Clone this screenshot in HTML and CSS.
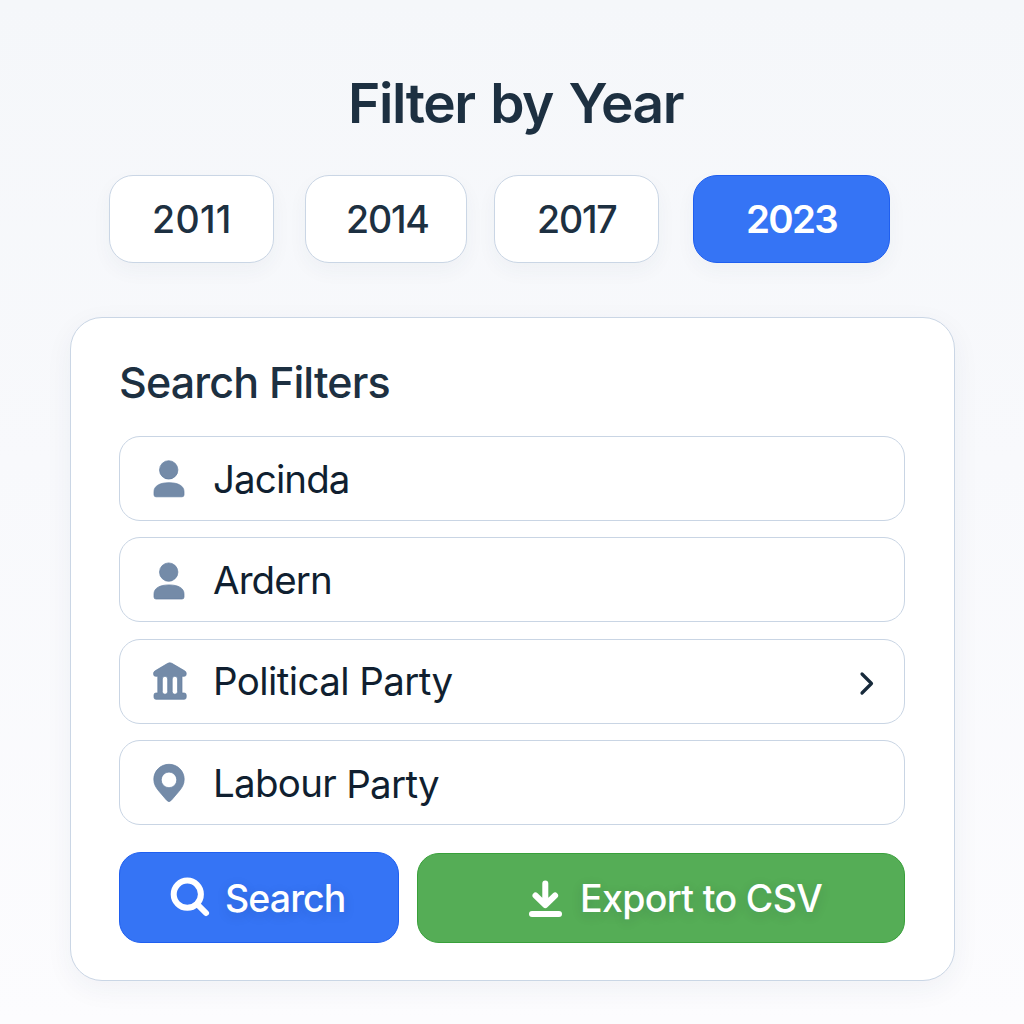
FILE: index.html
```html
<!DOCTYPE html>
<html lang="en">
<head>
<meta charset="utf-8">
<title>Filter by Year</title>
<link rel="stylesheet" href="styles.css">
</head>
<body>
<main class="page">
  <h1 class="title">Filter by Year</h1>
  <nav class="years">
    <button class="year y2011"><span>2011</span></button>
    <button class="year y2014"><span>2014</span></button>
    <button class="year y2017"><span>2017</span></button>
    <button class="year y2023 active"><span>2023</span></button>
  </nav>
  <section class="card">
    <h2 class="heading">Search Filters</h2>
    <div class="fields">
      <div class="field">
        <svg class="icon" viewBox="0 0 40 44"><circle cx="19.700" cy="12.900" r="9.200"/><path d="M5 37.800v-3.200c0-5.500 5.500-8.900 15-8.900s15 3.400 15 8.900v3.200a2 2 0 0 1-2 2H7a2 2 0 0 1-2-2z"/></svg>
        <span class="value first-name">Jacinda</span>
      </div>
      <div class="field">
        <svg class="icon" viewBox="0 0 40 44"><circle cx="19.700" cy="14.100" r="9.200"/><path d="M5 39v-3.200c0-5.500 5.500-8.900 15-8.900s15 3.400 15 8.900V39a2 2 0 0 1-2 2H7a2 2 0 0 1-2-2z"/></svg>
        <span class="value last-name">Ardern</span>
      </div>
      <div class="field">
        <svg class="icon" viewBox="0 0 40 44"><path fill-rule="evenodd" d="M18.800 4.300q2-1.100 4 0L35.600 11.800q1.600.9 1.600 2.400v1.100a2 2 0 0 1-2 2H33V34h2.200a2 2 0 0 1 2 2v2.300a2 2 0 0 1-2 2H7a2 2 0 0 1-2-2V36a2 2 0 0 1 2-2h1.800V17.300H6.600a2 2 0 0 1-2-2v-1.100q0-1.500 1.600-2.400zM16 17.300a2.700 2.700 0 0 0-2.700 2.700v12.600a2.700 2.700 0 0 0 5.400 0V20a2.700 2.700 0 0 0-2.700-2.700zM25.900 17.300a2.700 2.700 0 0 0-2.700 2.700v12.600a2.700 2.700 0 0 0 5.400 0V20a2.700 2.700 0 0 0-2.700-2.700z"/></svg>
        <span class="value party-label">Political Party</span>
        <svg class="chevron" viewBox="0 0 16 26"><path d="M3 4 12.500 13.500 3 23"/></svg>
      </div>
      <div class="field">
        <svg class="icon" viewBox="0 0 40 44"><path fill-rule="evenodd" d="M20 4.300C11.400 4.300 4.800 11 4.800 19.300c0 5 2.200 8.500 5.200 12l7.700 9q2.300 2.700 4.600 0l7.700-9c3-3.500 5.200-7 5.200-12C35.200 11 28.600 4.300 20 4.300zM20 12.100a7.800 7.800 0 1 1 0 15.600 7.800 7.800 0 0 1 0-15.600z"/></svg>
        <span class="value party-name">Labour <span class="lowered">Party</span></span>
      </div>
    </div>
    <div class="actions">
      <button class="action search">
        <svg class="glass" viewBox="0 0 42 42"><circle cx="17.300" cy="18.200" r="13.600"/><path d="m27 28 9 9"/></svg>
        <span class="label">Search</span>
      </button>
      <button class="action export">
        <svg class="download" viewBox="0 0 34 40"><path d="M17.300 5.500v21M7.500 17.500l9.800 9.500 9.800-9.500"/><path d="M4 36h27"/></svg>
        <span class="label">Export to CSV</span>
      </button>
    </div>
  </section>
</main>
</body>
</html>
```
FILE: styles.css
```css
* { box-sizing: border-box; }

body {
  margin: 0;
  height: 1024px;
  overflow: hidden;
  background: linear-gradient(#f5f7fa 0%, #f8f9fc 45%, #fcfcfe 100%);
  color: #1d3041;
  font-family: Inter, "Liberation Sans", sans-serif;
}

button {
  border: 0;
  padding: 0;
  margin: 0;
  font: inherit;
  color: inherit;
}

.page { padding: 67px 69px 0 70px; }

.title {
  margin: 0 0 36px 278px;
  font-size: 55px;
  line-height: 72px;
  font-weight: 600;
  letter-spacing: -1.4px;
  word-spacing: 3px;
  white-space: nowrap;
}

.years {
  display: flex;
  height: 88px;
  margin-left: 39px;
}

.year {
  display: flex;
  align-items: center;
  justify-content: flex-start;
  width: 165px;
  height: 88px;
  background: #fff;
  border: 1px solid #cad6e5;
  border-radius: 24px;
  box-shadow: 0 8px 20px rgba(40, 60, 100, .045);
  font-size: 37.5px;
  font-weight: 500;
  letter-spacing: -1.2px;
}

.y2011 { padding-left: 42px; letter-spacing: .3px; }
.y2014 { width: 162px; margin-left: 31px; padding-left: 40px; }
.y2017 { margin-left: 27px; padding-left: 42px; }
.y2023 { width: 197px; margin-left: 34px; padding-left: 52px; }

.year.active {
  background: #3574f5;
  border-color: #1f5ff0;
  color: #fff;
  font-size: 38.5px;
  font-weight: 600;
  letter-spacing: -1.7px;
}

.card {
  height: 664px;
  margin-top: 54px;
  padding: 36px 49px 0 48px;
  background: #fff;
  border: 1px solid #cad6e5;
  border-radius: 32px;
  box-shadow: 0 8px 28px rgba(40, 60, 100, .055);
}

.heading {
  margin: 0 0 26px;
  font-size: 43px;
  line-height: 56px;
  font-weight: 500;
  letter-spacing: -.85px;
  white-space: nowrap;
}

.fields {
  display: grid;
  grid-auto-rows: 85px;
  row-gap: 16.33px;
}

.field {
  display: flex;
  align-items: center;
  padding: 0 29px;
  border: 1px solid #c9d5e4;
  border-radius: 21px;
}

.icon {
  flex: none;
  width: 40px;
  height: 44px;
  fill: #748ba8;
  stroke: #627d9f;
  stroke-width: .7;
}

.value {
  margin-left: 24px;
  color: #101f30;
  font-size: 38.5px;
  line-height: 50px;
  font-weight: 400;
  letter-spacing: -.9px;
  white-space: nowrap;
}

.party-label { letter-spacing: -.6px; }
.party-name { margin-top: 1px; letter-spacing: -.7px; }

.lowered { position: relative; top: 1px; }

.chevron {
  width: 16px;
  height: 26px;
  margin: 4px 0 0 auto;
  fill: none;
  stroke: #172a3b;
  stroke-width: 3.2;
  stroke-linecap: round;
  stroke-linejoin: round;
}

.actions {
  display: flex;
  gap: 18px;
  margin-top: 27px;
}

.action {
  display: flex;
  align-items: center;
  height: 91px;
  border-radius: 22px;
  color: #fff;
  font-size: 37.5px;
  font-weight: 500;
  letter-spacing: -.8px;
  white-space: nowrap;
}

.action svg {
  flex: none;
  fill: none;
  stroke: #fff;
  stroke-width: 6;
  stroke-linecap: round;
  stroke-linejoin: round;
}

.label { margin-top: 1px; text-shadow: 0 3px 12px rgba(0, 30, 60, .16); }

.search {
  width: 280px;
  padding-left: 50px;
  background: #3574f5;
  border: 1px solid #1f5ff0;
}

.search .label { margin-top: 2px; letter-spacing: -.9px; }

.glass { width: 42px; height: 42px; margin-right: 13px; }

.export {
  width: 488px;
  height: 90px;
  margin-top: 1px;
  padding-left: 110px;
  background: #55ad56;
  border: 1px solid #38a03a;
}

.export .label { letter-spacing: -.65px; }

.download { width: 34px; height: 40px; margin-right: 18px; }
```
